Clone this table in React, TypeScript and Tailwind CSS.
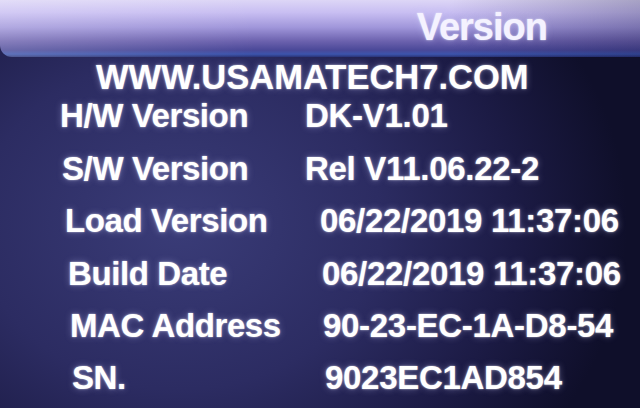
const rows = [
  { label: 'H/W Version', value: 'DK-V1.01', lx: 'pl-[60px]', vx: 'pl-[305px]' },
  { label: 'S/W Version', value: 'Rel V11.06.22-2', lx: 'pl-[62px]', vx: 'pl-[305px]' },
  { label: 'Load Version', value: '06/22/2019 11:37:06', lx: 'pl-[65px]', vx: 'pl-[320px]' },
  { label: 'Build Date', value: '06/22/2019 11:37:06', lx: 'pl-[68px]', vx: 'pl-[322px]' },
  { label: 'MAC Address', value: '90-23-EC-1A-D8-54', lx: 'pl-[70px]', vx: 'pl-[323px]' },
  { label: 'SN.', value: '9023EC1AD854', lx: 'pl-[72px]', vx: 'pl-[325px]' },
]

const glow = '[text-shadow:0_0_2px_rgba(255,255,255,0.7),0_0_7px_rgba(200,200,255,0.4)]'

export default function App() {
  return (
    <div
      className="w-[640px] h-[408px] overflow-hidden flex flex-col text-white font-['Liberation_Sans',Arial,sans-serif] font-bold bg-[radial-gradient(ellipse_70%_90%_at_28%_55%,#3a3c78_0%,#2c2c62_45%,#1c1b45_75%,#0f0f2a_100%)]"
    >
      {/* title bar */}
      <div className="relative h-[57px] shrink-0 rounded-bl-[12px] bg-[linear-gradient(180deg,#ddd6f6_0%,#c8bef2_22%,#a096da_48%,#6c62ae_72%,#4a4898_88%,#3c54ac_95%,#2a3478_100%)]">
        <div className="absolute inset-0 rounded-bl-[12px] bg-[linear-gradient(90deg,rgba(255,255,255,0.18)_0%,rgba(255,255,255,0)_40%,rgba(0,0,40,0)_70%,rgba(10,10,50,0.25)_100%)]" />
        <div className="relative flex justify-end pr-[93px] pt-[6px]">
          <span className={`text-[38px] leading-[42px] tracking-[-1px] text-[#f4f2ff] ${glow}`}>
            Version
          </span>
        </div>
      </div>

      <div className={`pl-[96px] pt-[2px] text-[34.5px] leading-[36px] ${glow}`}>
        WWW.USAMATECH7.COM
      </div>

      <div className="flex flex-col -mt-[5px]">
        {rows.map((r) => (
          <div key={r.label} className="relative h-[52.4px] flex items-center">
            <span className={`absolute ${r.lx} text-[33px] tracking-[-0.4px] ${glow}`}>{r.label}</span>
            <span className={`absolute ${r.vx} text-[33px] tracking-[-0.3px] ${glow}`}>{r.value}</span>
          </div>
        ))}
      </div>
    </div>
  )
}
